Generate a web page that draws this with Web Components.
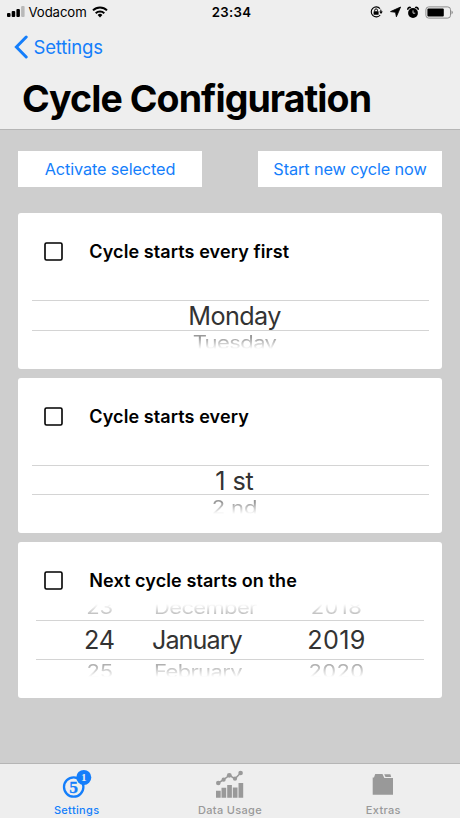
<!DOCTYPE html>
<html lang="en">
<head>
<meta charset="utf-8">
<title>Cycle Configuration</title>
<style>
  html, body { margin: 0; height: 100%; }
  body { font-family: Inter, "Liberation Sans", sans-serif; color: #000; overflow: hidden; }
</style>
</head>
<body>
<cycle-screen>
  <status-bar slot="top" carrier="Vodacom" time="23:34"></status-bar>
  <nav-header slot="top" back="Settings">Cycle Configuration</nav-header>

  <action-button slot="actions" style="--track: -0.13px">Activate selected</action-button>
  <action-button slot="actions" style="--track: -0.12px">Start new cycle now</action-button>

  <cycle-card label="Cycle starts every first">
    <wheel-picker><wheel-column next="Tuesday" style="--track: -0.6px">Monday</wheel-column></wheel-picker>
  </cycle-card>
  <cycle-card label="Cycle starts every">
    <wheel-picker><wheel-column next="2 nd">1 st</wheel-column></wheel-picker>
  </cycle-card>
  <cycle-card label="Next cycle starts on the">
    <wheel-picker date>
      <wheel-column prev="23" next="25" align="right">24</wheel-column>
      <wheel-column prev="December" next="February" align="left" style="--track: -0.95px; --side-track: -0.65px">January</wheel-column>
      <wheel-column prev="2018" next="2020" style="--track: 0.4px">2019</wheel-column>
    </wheel-picker>
  </cycle-card>

  <tab-bar slot="bottom">
    <tab-item icon="coins" active>Settings</tab-item>
    <tab-item icon="chart">Data Usage</tab-item>
    <tab-item icon="folder">Extras</tab-item>
  </tab-bar>
</cycle-screen>

<script>
class CycleScreen extends HTMLElement {
  constructor() {
    super();
    this.attachShadow({ mode: "open" }).innerHTML = `
      <style>
        :host {
          display: flex; flex-direction: column;
          height: 818px; width: 460px;
          background: #cecece;
        }
        header {
          height: 129.5px; flex: none;
          background: #eeeeee;
          border-bottom: 1px solid #b5b5b5;
          box-sizing: border-box;
        }
        main { flex: 1; padding: 21.5px 18px 0; }
        .actions {
          display: flex; justify-content: space-between;
          margin-bottom: 26.3px;
        }
        .cards { display: flex; flex-direction: column; gap: 9px; }
      </style>
      <header><slot name="top"></slot></header>
      <main>
        <div class="actions"><slot name="actions"></slot></div>
        <div class="cards"><slot></slot></div>
      </main>
      <slot name="bottom"></slot>
    `;
  }
}

class StatusBar extends HTMLElement {
  connectedCallback() {
    this.attachShadow({ mode: "open" }).innerHTML = `
      <style>
        :host {
          display: grid; grid-template-columns: 1fr auto 1fr;
          align-items: center; height: 24px; padding: 0 7px;
          font-size: 13.2px;
        }
        svg { display: block; flex: none; }
        .left, .right { display: flex; align-items: center; }
        .carrier { margin: 0 5px 0 3.5px; letter-spacing: -0.1px; }
        .right { justify-content: flex-end; }
        .time { font-weight: 600; letter-spacing: 0.3px; padding-left: 3px; }
      </style>
      <div class="left">
        <svg width="18" height="12" viewBox="0 0 18 12">
          <rect x="0" y="7" width="3.5" height="4" rx="1"/>
          <rect x="4.7" y="5" width="3.5" height="6" rx="1"/>
          <rect x="9.4" y="3" width="3.5" height="8" rx="1"/>
          <rect x="14.1" y="0" width="3.5" height="11" rx="1" fill="#b9b9b9"/>
        </svg>
        <span class="carrier">${this.getAttribute("carrier")}</span>
        <svg width="16" height="12" viewBox="0 0 16 12">
          <g fill="none" stroke="#000" stroke-width="2">
            <path d="M1 4.4a10 10 0 0 1 14 0"/>
            <path d="M3.7 7.2a6.2 6.2 0 0 1 8.6 0"/>
          </g>
          <path d="M5.6 9a3.5 3.5 0 0 1 4.8 0L8 11.5z"/>
        </svg>
      </div>
      <span class="time">${this.getAttribute("time")}</span>
      <div class="right">
        <svg width="13" height="12" viewBox="0 0 13 12">
          <path d="M10 2.6A5 5 0 1 0 10.2 9M10.6 3.6A5 5 0 0 1 11 6" fill="none" stroke="#000" stroke-width="1.1"/>
          <path d="M9.2 5.6h3.6L11 8z"/>
          <rect x="3.6" y="5.2" width="5" height="3.6" rx=".5"/>
          <path d="M4.7 5.4V4.3a1.4 1.4 0 0 1 2.8 0v1.1" fill="none" stroke="#000"/>
        </svg>
        <svg width="11" height="12" viewBox="0 0 11 12" style="margin: 0 6px 0 7px">
          <path d="M10.6 1 6.4 10.8 5.5 6.3.5 5.6z" stroke="#000" stroke-width=".8"/>
        </svg>
        <svg width="12" height="13" viewBox="0 0 12 13" style="margin-right: 6px">
          <circle cx="6" cy="7" r="4.9"/>
          <path d="M1 3.8A1.8 1.8 0 0 1 3.8 1.8M11 3.8A1.8 1.8 0 0 0 8.2 1.8" fill="none" stroke="#000" stroke-width="1.6"/>
          <path d="M6 4.4V7.2H8.2" fill="none" stroke="#eee" stroke-width=".8"/>
        </svg>
        <svg width="28" height="13" viewBox="0 0 28 13">
          <rect x=".9" y=".9" width="24.6" height="11.2" rx="2.8" fill="none" stroke="#8c8c8c" stroke-width="1"/>
          <rect x="2.4" y="2.5" width="16.4" height="8" rx="1"/>
          <path d="M26.5 4.6q1.3.6 1.3 1.9t-1.3 1.9z" fill="#8c8c8c"/>
        </svg>
      </div>
    `;
  }
}

class NavHeader extends HTMLElement {
  connectedCallback() {
    this.attachShadow({ mode: "open" }).innerHTML = `
      <style>
        :host { display: block; }
        .back {
          display: flex; align-items: center; gap: 5.5px;
          height: 46px; padding-left: 14px;
          color: #147efb; font-size: 18.5px; letter-spacing: -0.2px;
        }
        h1 {
          margin: 0 0 0 22px; font-size: 37.5px; line-height: 58px;
          font-weight: 700; letter-spacing: -0.92px; white-space: nowrap;
        }
      </style>
      <div class="back">
        <svg width="14" height="24" viewBox="0 0 14 24">
          <path d="M12.2 2 2.4 12l9.8 10" fill="none" stroke="#147efb" stroke-width="3" stroke-linecap="round" stroke-linejoin="miter"/>
        </svg>
        <span>${this.getAttribute("back")}</span>
      </div>
      <h1><slot></slot></h1>
    `;
  }
}

class ActionButton extends HTMLElement {
  constructor() {
    super();
    this.attachShadow({ mode: "open" }).innerHTML = `
      <style>
        :host { display: block; }
        button {
          display: block; width: 184px; height: 36px; padding: 0;
          border: 0; background: #fff; color: #147efb;
          font: 16.3px Inter, "Liberation Sans", sans-serif;
          letter-spacing: var(--track, 0); white-space: nowrap;
        }
      </style>
      <button><slot></slot></button>
    `;
  }
}

class CycleCard extends HTMLElement {
  connectedCallback() {
    this.attachShadow({ mode: "open" }).innerHTML = `
      <style>
        :host {
          display: block; height: 155.5px;
          background: #fff; border-radius: 3px;
        }
        label {
          display: flex; align-items: center; gap: 26.3px;
          height: 47px; padding: 15px 0 0 26px;
          font-size: 18px; font-weight: 600; letter-spacing: 0.09px;
        }
        svg { display: block; }
      </style>
      <label>
        <svg width="19" height="19" viewBox="0 0 19 19">
          <rect x="1" y="1" width="17" height="17" rx="1.5" fill="none" stroke="#000" stroke-width="1.6"/>
        </svg>
        ${this.getAttribute("label")}
      </label>
      <slot></slot>
    `;
  }
}

class WheelPicker extends HTMLElement {
  constructor() {
    super();
    this.attachShadow({ mode: "open" }).innerHTML = `
      <style>
        :host {
          display: grid; margin: 0 13px 0 14px;
          --above: 25px; --band: 31px;
          background:
            linear-gradient(#d4d4d4, #d4d4d4) 0 25px / 100% 1px no-repeat,
            linear-gradient(#d4d4d4, #d4d4d4) 0 54.5px / 100% 1px no-repeat;
        }
        :host(:not([date])) ::slotted(*) { padding-left: 8px; }
        :host([date]) {
          margin: 0 18px;
          grid-template-columns: 79px 168px 107px;
          --above: 16px; --band: 39px; --drop: 1px; --ink: #b0b0b0;
          background:
            linear-gradient(#d4d4d4, #d4d4d4) 0 16px / 100% 1px no-repeat,
            linear-gradient(#d4d4d4, #d4d4d4) 0 54.5px / 100% 1px no-repeat;
        }
      </style>
      <slot></slot>
    `;
  }
}

class WheelColumn extends HTMLElement {
  connectedCallback() {
    const align = this.getAttribute("align") || "center";
    this.attachShadow({ mode: "open" }).innerHTML = `
      <style>
        :host {
          display: grid;
          grid-template-rows: var(--above) var(--band) 18px;
          text-align: ${align};
          padding-left: ${align === "left" ? "37px" : "0"};
          white-space: nowrap;
          font-size: 25.2px; letter-spacing: var(--track, -0.1px); color: #333;
        }
        .now { line-height: calc(var(--band) + 1px); }
        .side {
          overflow: hidden; font-size: 22px; color: var(--ink, #999);
          letter-spacing: var(--side-track, var(--track, -0.1px));
          padding: ${align === "center" ? "0" : "0 2px"};
        }
        .side span {
          display: block; line-height: 24px; flex: none;
          transform: translateY(-1px) scaleY(0.82);
        }
        .prev {
          display: flex; flex-direction: column; justify-content: flex-end;
          -webkit-mask: linear-gradient(transparent 0, #000 80%);
          mask: linear-gradient(transparent 0, #000 80%);
        }
        .next {
          -webkit-mask: linear-gradient(#000 35%, transparent 100%);
          mask: linear-gradient(#000 35%, transparent 100%);
        }
        .next span { margin-top: var(--drop, 0); }
      </style>
      <div class="side prev"><span>${this.getAttribute("prev") || ""}</span></div>
      <div class="now"><slot></slot></div>
      <div class="side next"><span>${this.getAttribute("next") || ""}</span></div>
    `;
  }
}

class TabBar extends HTMLElement {
  constructor() {
    super();
    this.attachShadow({ mode: "open" }).innerHTML = `
      <style>
        :host {
          display: grid; grid-template-columns: repeat(3, 1fr);
          height: 55px; flex: none; box-sizing: border-box;
          background: #eeeeee; border-top: 1px solid #b5b5b5;
        }
      </style>
      <slot></slot>
    `;
  }
}

class TabItem extends HTMLElement {
  _getIcon(name) {
    const icons = {
      coins: `
        <circle cx="12.7" cy="18" r="9.7" fill="none" stroke="currentColor" stroke-width="2.3"/>
        <circle cx="22.8" cy="8.4" r="7.5" fill="currentColor"/>
        <text x="12.7" y="23.6" font-size="17.5" text-anchor="middle" fill="currentColor" stroke="currentColor" stroke-width=".3">5</text>
        <text x="22.8" y="12" font-size="11" text-anchor="middle" fill="#eee">1</text>`,
      chart: `
        <path d="M2 21.7h4.7v7H2zM7.5 18.7h4.7v10H7.5zM13.2 16h4.7v12.7h-4.7zM18.8 18.4h4.7v10.3h-4.7zM24.5 14h4.7v14.7h-4.7z" fill="currentColor"/>
        <path d="M4.3 14l5.3-3.3 5.7-4.4 5.7 3.4L26.6 4" fill="none" stroke="currentColor" stroke-width="1.5"/>
        <g fill="currentColor"><circle cx="4.3" cy="14" r="2.3"/><circle cx="9.6" cy="10.7" r="2.1"/><circle cx="15.3" cy="6.3" r="2.4"/><circle cx="21" cy="9.7" r="2.1"/><circle cx="26.6" cy="4" r="2.3"/></g>`,
      folder: `
        <path d="M5.7 8.6H7L8.2 5h7.3l1.8 4H26v16.7H5.7z" fill="currentColor"/>
        <path d="M17.2 5.2h6.2l.8 2.8h-5.7z" fill="currentColor"/>`,
    };
    return icons[name];
  }

  connectedCallback() {
    const color = this.hasAttribute("active") ? "#147efb" : "#999999";
    this.attachShadow({ mode: "open" }).innerHTML = `
      <style>
        :host {
          display: flex; flex-direction: column; align-items: center;
          padding-top: 5px; color: ${color};
          font-size: 11px; font-weight: 500; letter-spacing: 0.33px;
        }
        svg { display: block; }
        text { font-family: "Liberation Serif", serif; font-weight: 700; letter-spacing: 0; }
        span { line-height: 14px; margin-top: 4px; }
      </style>
      <svg width="32" height="30" viewBox="0 0 32 30">${this._getIcon(this.getAttribute("icon"))}</svg>
      <span><slot></slot></span>
    `;
  }
}

customElements.define("cycle-screen", CycleScreen);
customElements.define("status-bar", StatusBar);
customElements.define("nav-header", NavHeader);
customElements.define("action-button", ActionButton);
customElements.define("cycle-card", CycleCard);
customElements.define("wheel-picker", WheelPicker);
customElements.define("wheel-column", WheelColumn);
customElements.define("tab-bar", TabBar);
customElements.define("tab-item", TabItem);
</script>
</body>
</html>
